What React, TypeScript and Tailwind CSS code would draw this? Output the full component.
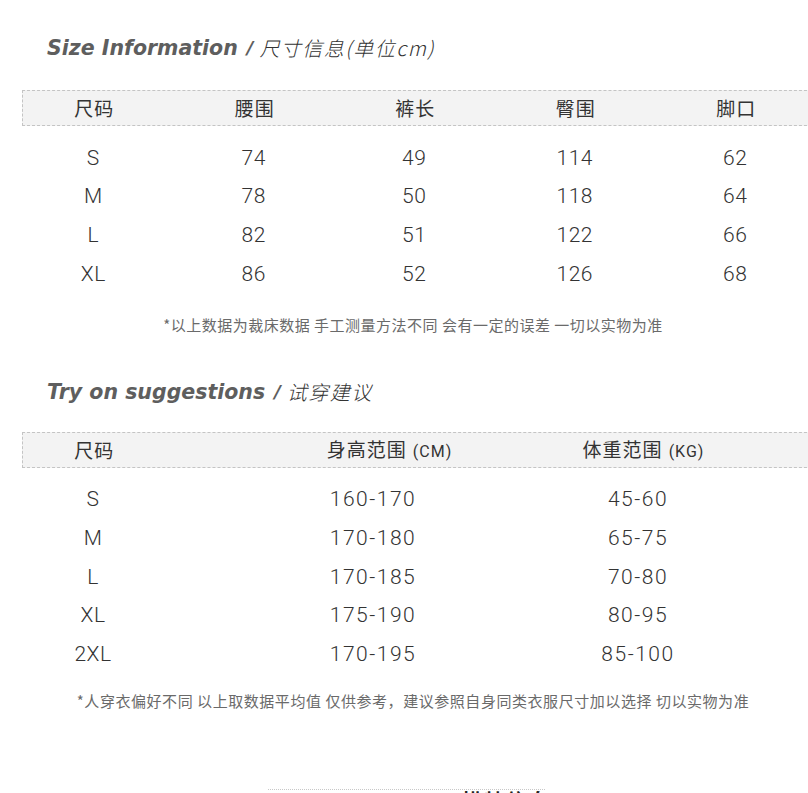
import React from 'react'

const SIZE_ROWS = [
  ['S', '74', '49', '114', '62'],
  ['M', '78', '50', '118', '64'],
  ['L', '82', '51', '122', '66'],
  ['XL', '86', '52', '126', '68'],
]

const TRY_ROWS = [
  ['S', '160-170', '45-60'],
  ['M', '170-180', '65-75'],
  ['L', '170-185', '70-80'],
  ['XL', '175-190', '80-95'],
  ['2XL', '170-195', '85-100'],
]

const cjk = "font-['Noto_Sans_CJK_SC',sans-serif]"
const num = "font-['Roboto','Noto_Sans_CJK_SC',sans-serif] font-light"

function Title({ en, zh }: { en: string; zh: string }) {
  return (
    <div className="pl-[47px] h-[24px] flex items-center leading-[24px] whitespace-nowrap">
      <span className="font-['DejaVu_Sans',sans-serif] font-bold italic text-[20.5px] text-[#5e5e5e]">{en}</span>
      <span className="font-['DejaVu_Sans',sans-serif] font-bold italic text-[18px] text-[#5e5e5e] ml-[9px] mr-[6px]">/</span>
      <span className={`${cjk} font-light italic text-[20px] text-[#333] tracking-[1.5px]`}>{zh}</span>
    </div>
  )
}

function HeaderBand({ children }: { children: React.ReactNode }) {
  return (
    <div className="ml-[22px] w-[800px] h-[36px] bg-[#f3f3f3] border border-dashed border-[#c4c4c4] flex items-center">
      <div className="-ml-[9px] flex items-center shrink-0">{children}</div>
    </div>
  )
}

export default function App() {
  return (
    <div className="w-[808px] h-[793px] overflow-hidden bg-white text-[#333]">
      <div className="pt-[36px]">
        <Title en="Size Information" zh="尺寸信息(单位cm)" />
      </div>

      <div className="mt-[30px]">
        <HeaderBand>
          {['尺码', '腰围', '裤长', '臀围', '脚口'].map(h => (
            <div key={h} className={`w-[160.5px] shrink-0 text-center ${cjk} text-[19px] tracking-[1px]`}>{h}</div>
          ))}
        </HeaderBand>
      </div>

      <div className="mt-[13px] ml-[13px]">
        {SIZE_ROWS.map(r => (
          <div key={r[0]} className="flex h-[38.7px] items-center">
            {r.map((c, i) => (
              <div key={i} className={`w-[160.5px] shrink-0 text-center ${num} text-[21px] tracking-[0.5px]`}>{c}</div>
            ))}
          </div>
        ))}
      </div>

      <div className={`mt-[21px] h-[20px] leading-[20px] text-center pl-[18px] ${cjk} text-[15px] text-[#6a6a6a] tracking-[0.5px]`}>
        *以上数据为裁床数据 手工测量方法不同 会有一定的误差 一切以实物为准
      </div>

      <div className="mt-[45px]">
        <Title en="Try on suggestions" zh="试穿建议" />
      </div>

      <div className="mt-[28px]">
        <HeaderBand>
          <div className={`w-[160.5px] shrink-0 text-center ${cjk} text-[19px] tracking-[1px]`}>尺码</div>
          <div className={`w-[400px] shrink-0 text-center pl-[30px] ${cjk} text-[19px] tracking-[1px]`}>
            身高范围<span className="font-['Roboto',sans-serif] text-[16px] ml-[6px] tracking-[1px]">(CM)</span>
          </div>
          <div className={`w-[130px] shrink-0 text-center pl-[8px] whitespace-nowrap ${cjk} text-[19px] tracking-[1px]`}>
            体重范围<span className="font-['Roboto',sans-serif] text-[16px] ml-[6px] tracking-[1px]">(KG)</span>
          </div>
        </HeaderBand>
      </div>

      <div className="mt-[13px] ml-[13px]">
        {TRY_ROWS.map(r => (
          <div key={r[0]} className="flex h-[38.7px] items-center">
            <div className={`w-[160px] shrink-0 text-center ${num} text-[21px] tracking-[0.5px]`}>{r[0]}</div>
            <div className={`w-[400px] shrink-0 text-center ${num} text-[21px] tracking-[1.5px]`}>{r[1]}</div>
            <div className={`w-[130px] shrink-0 text-center ${num} text-[21px] tracking-[1.5px]`}>{r[2]}</div>
          </div>
        ))}
      </div>

      <div className={`mt-[17px] h-[20px] leading-[20px] text-center pl-[18px] ${cjk} text-[15px] text-[#6a6a6a] tracking-[0.55px] whitespace-nowrap`}>
        *人穿衣偏好不同 以上取数据平均值 仅供参考，建议参照自身同类衣服尺寸加以选择 切以实物为准
      </div>

      <div className="mt-[78px] ml-[268px] w-[277px] border-t border-dotted border-[#c8c8c8]" />
      <div className={`ml-[462px] -mt-[1px] ${cjk} text-[20px] font-bold text-[#222] leading-[24px] tracking-[2px]`}>模特信息</div>
    </div>
  )
}
